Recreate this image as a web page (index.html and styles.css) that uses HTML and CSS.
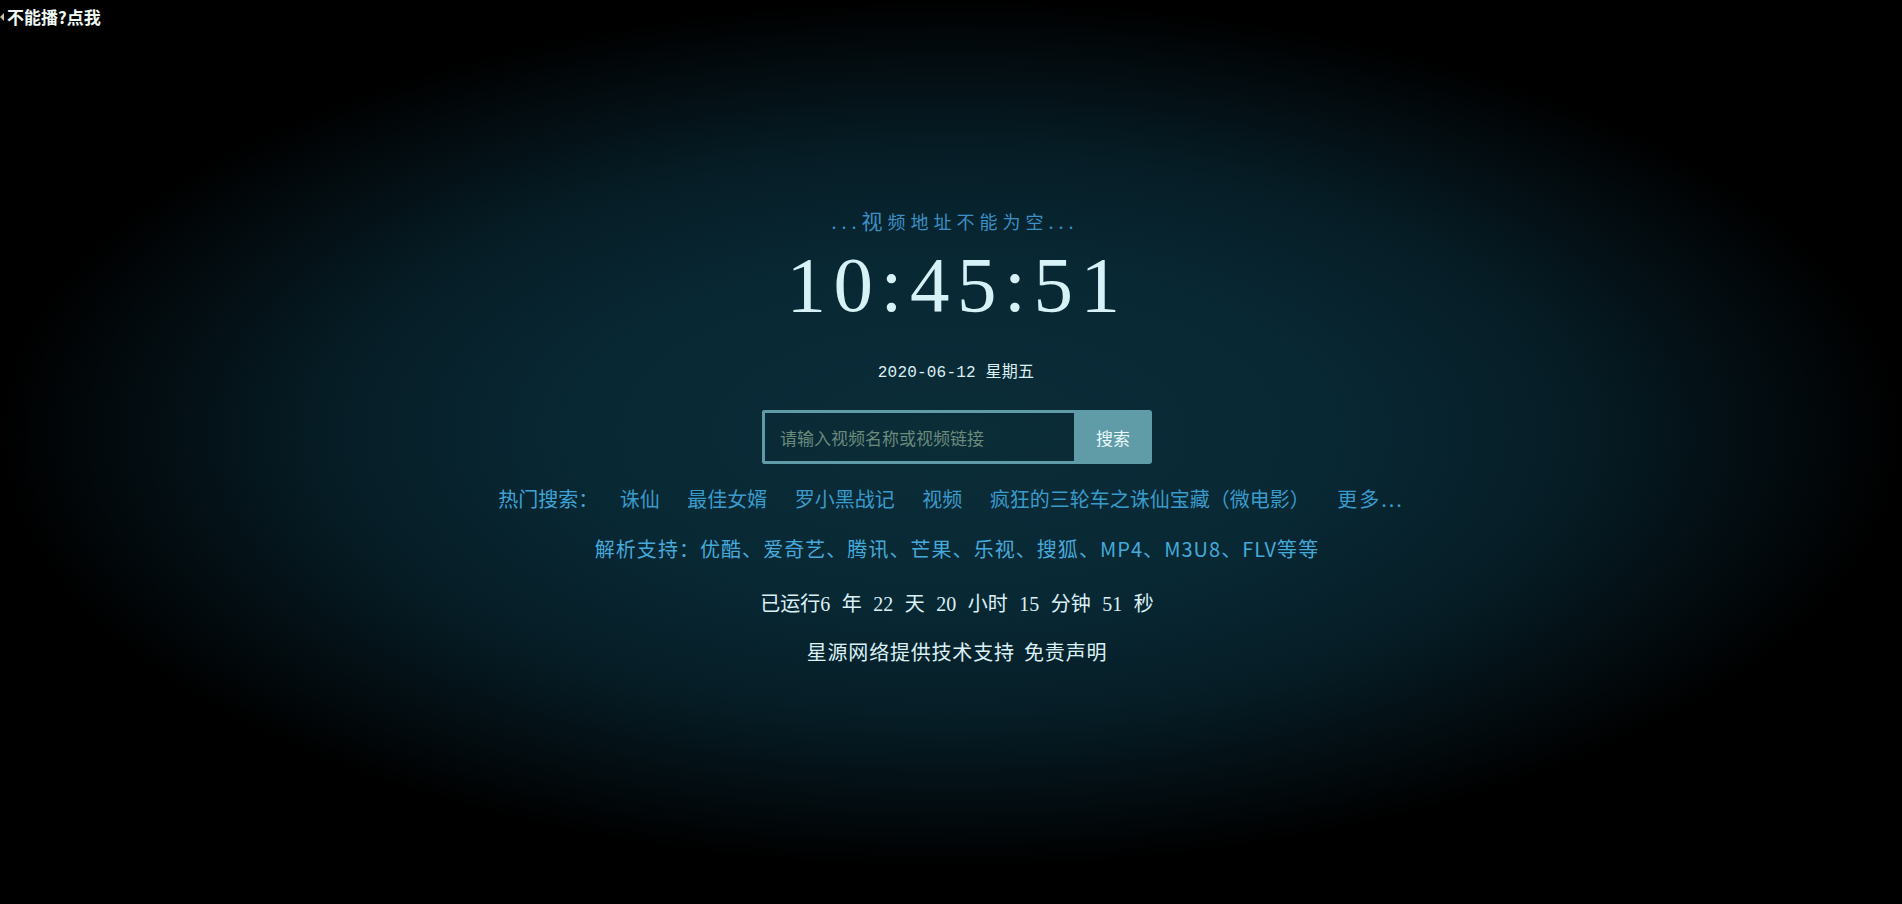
FILE: index.html
```html
<!DOCTYPE html>
<html lang="zh-CN">
<head>
<meta charset="utf-8">
<title>视频解析</title>
<link rel="stylesheet" href="styles.css">
</head>
<body>
<a class="notice" href="#"><span class="notice-mark"></span>不能播?点我</a>
<main class="wrap">
  <div class="tip">...<span class="tip-big">视</span>频地址不能为空...</div>
  <div class="clock">10:45:51</div>
  <div class="date">2020-06-12 星期五</div>
  <form class="search">
    <input class="search-input" type="text" placeholder="请输入视频名称或视频链接">
    <button class="search-btn" type="button">搜索</button>
  </form>
  <div class="hot">
    <span class="hot-label">热门搜索：</span>
    <a class="hot-link" href="#">诛仙</a>
    <a class="hot-link" href="#">最佳女婿</a>
    <a class="hot-link" href="#">罗小黑战记</a>
    <a class="hot-link" href="#">视频</a>
    <a class="hot-link" href="#">疯狂的三轮车之诛仙宝藏（微电影）</a>
    <a class="hot-link more" href="#">更多...</a>
  </div>
  <div class="support">解析支持：优酷、爱奇艺、腾讯、芒果、乐视、搜狐、MP4、M3U8、FLV等等</div>
  <div class="uptime">已运行6 年 22 天 20 小时 15 分钟 51 秒</div>
  <div class="footer">星源网络提供技术支持 免责声明</div>
</main>
</body>
</html>
```
FILE: styles.css
```css
html, body {
  margin: 0;
  padding: 0;
  height: 100%;
}
body {
  position: relative;
  overflow: hidden;
  background: #000;
  background-image: radial-gradient(ellipse closest-side at 50% 48%, #0b2d38 0%, #082834 40%, #061d26 65%, #030c10 86%, #000 100%);
  font-family: "Noto Sans CJK SC", "Noto Sans", sans-serif;
  color: #d8f0f5;
}
.notice {
  position: absolute;
  top: 5px;
  left: 0;
  display: flex;
  align-items: center;
  font-size: 17px;
  line-height: 24px;
  font-weight: bold;
  color: #eef8f4;
  text-decoration: none;
}
.notice-mark {
  display: inline-block;
  width: 0;
  height: 0;
  border-top: 4px solid transparent;
  border-bottom: 4px solid transparent;
  border-right: 4px solid #c9c2a4;
  margin-right: 3px;
}
.wrap {
  display: flex;
  flex-direction: column;
  align-items: center;
  padding-top: 208px;
}
.tip {
  font-size: 18px;
  line-height: 24px;
  height: 24px;
  letter-spacing: 5px;
  padding-left: 8px;
  color: #3c8fc4;
}
.tip-big {
  font-size: 21px;
}
.clock {
  margin-top: 13px;
  font-family: "Liberation Serif", "Times New Roman", serif;
  font-size: 79px;
  line-height: 80px;
  letter-spacing: 7.5px;
  padding-left: 12px;
  color: #d6f2f7;
}
.date {
  margin-top: 38px;
  font-family: "Liberation Mono", "DejaVu Sans Mono", "Noto Sans CJK SC", monospace;
  font-size: 16px;
  line-height: 20px;
  letter-spacing: 0.2px;
  padding-left: 10px;
  color: #dcf0f4;
}
.search {
  margin: 27px 0 0;
  display: flex;
  width: 402px;
  height: 54px;
  padding-left: 12px;
  box-sizing: border-box;
}
.search-input {
  flex: 1;
  min-width: 0;
  margin: 0;
  box-sizing: border-box;
  height: 54px;
  border: 3px solid #5f9ca8;
  border-right: none;
  border-radius: 3px 0 0 3px;
  background: transparent;
  padding: 0 15px;
  font-family: "Noto Sans CJK SC", sans-serif;
  font-size: 17px;
  color: #cfe4e8;
  outline: none;
}
.search-input::placeholder {
  color: #6a8a7c;
}
.search-btn {
  width: 78px;
  height: 54px;
  margin: 0;
  border: none;
  border-radius: 0 3px 3px 0;
  background: #5f9ca8;
  color: #eaf8fa;
  font-family: "Noto Sans CJK SC", sans-serif;
  font-size: 17px;
  padding: 0;
  cursor: pointer;
}
.hot {
  margin-top: 20px;
  display: flex;
  align-items: center;
  gap: 27.5px;
  font-size: 20px;
  line-height: 30px;
}
.hot-label {
  color: #3fa3d7;
  margin-right: -6px;
}
.hot-link {
  color: #3a9acb;
  text-decoration: none;
}
.more {
  letter-spacing: 2px;
}
.support {
  margin-top: 20px;
  font-size: 20px;
  line-height: 30px;
  color: #46a9da;
  letter-spacing: 1.05px;
  padding-left: 12px;
}
.uptime {
  margin-top: 25px;
  font-family: "Liberation Serif", "Noto Sans CJK SC", serif;
  font-size: 20px;
  line-height: 30px;
  word-spacing: 6.5px;
  padding-left: 12px;
  color: #dcf1f5;
}
.footer {
  margin-top: 18px;
  font-size: 20px;
  line-height: 30px;
  color: #dcf1f5;
  letter-spacing: 0.8px;
  word-spacing: 4px;
  padding-left: 12px;
}
```
